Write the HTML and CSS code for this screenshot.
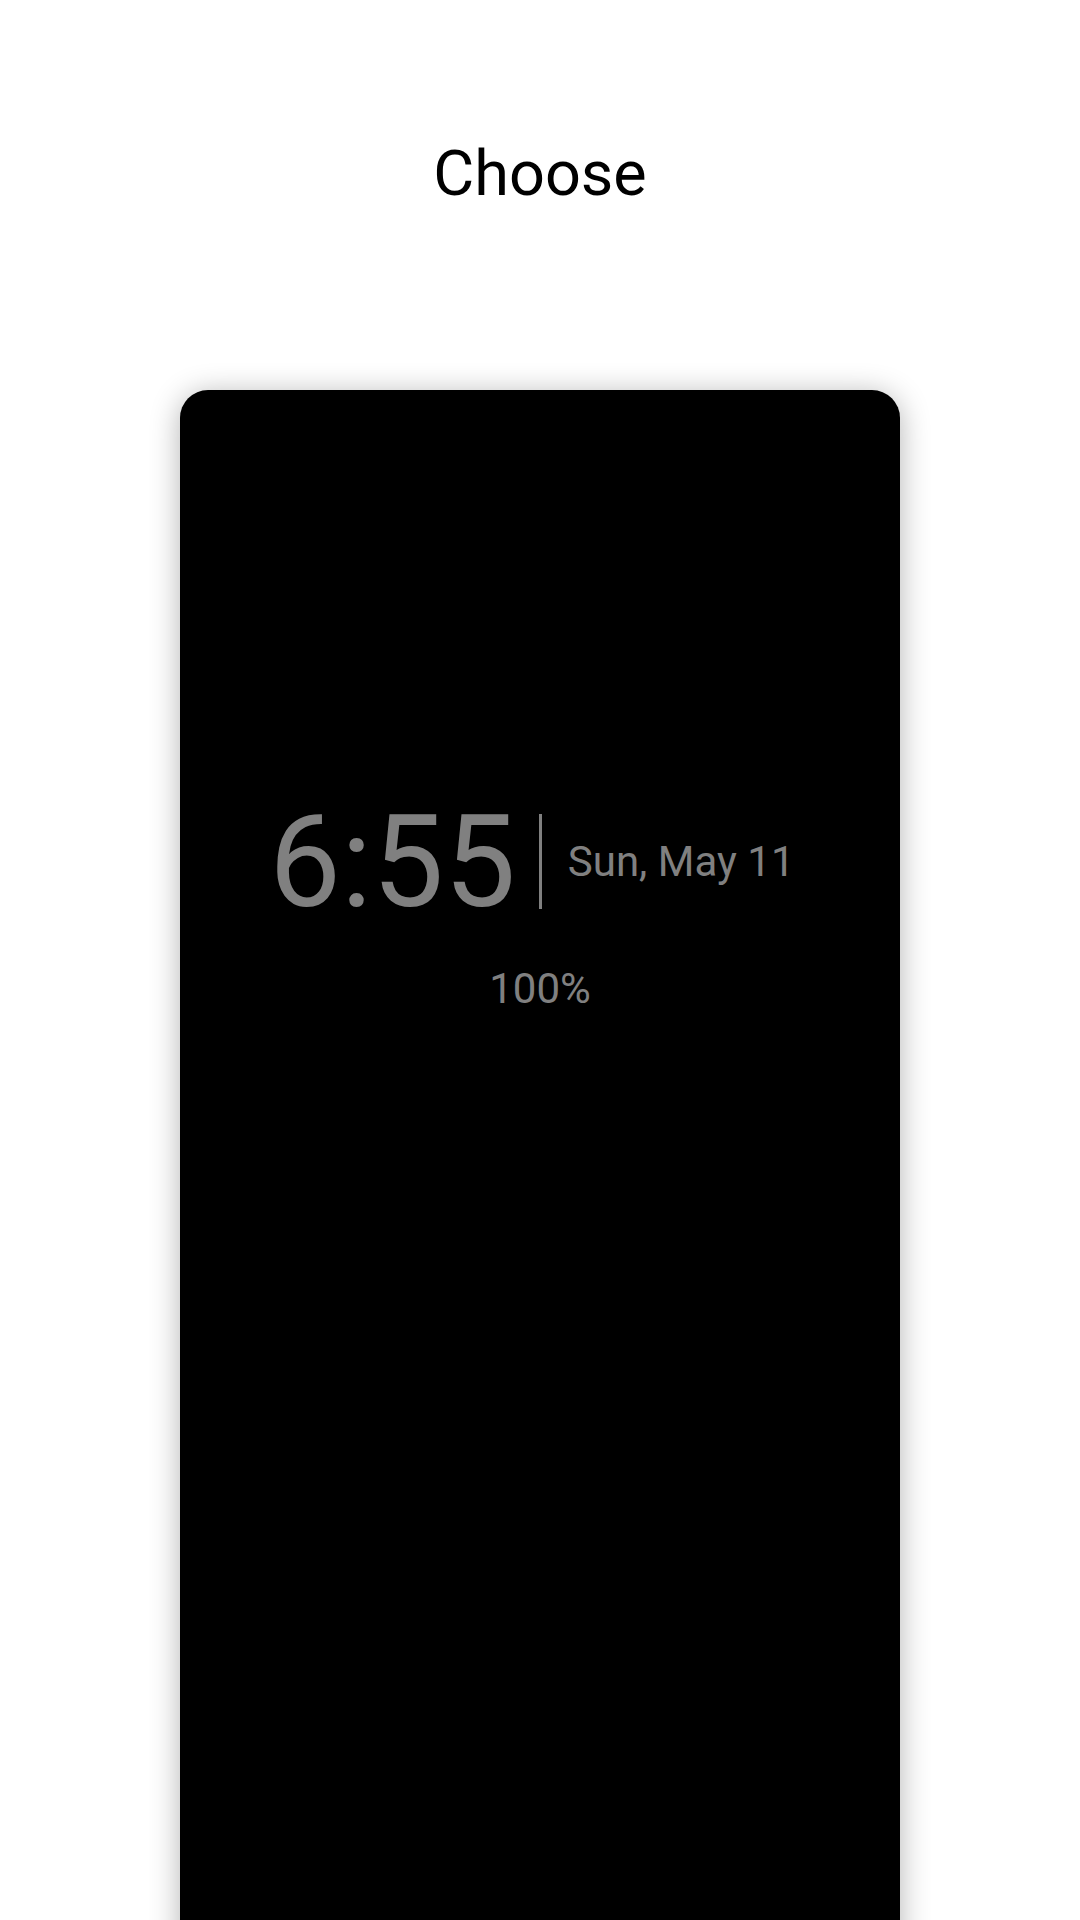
FILE: index.html
```html
<!DOCTYPE html>
<html>
<head>
<meta charset="utf-8">
<link rel="stylesheet" href="styles.css">
</head>
<body>
<div class="screen">
  <h1 class="title">Choose</h1>
  <div class="card">
    <div class="clock-row">
      <span class="time">6:55</span>
      <span class="divider"></span>
      <span class="date">Sun, May 11</span>
    </div>
    <div class="battery">100%</div>
  </div>
</div>
</body>
</html>
```
FILE: styles.css
```css
html, body {
  margin: 0;
  padding: 0;
  background: #ffffff;
  overflow: hidden;
}
.screen {
  width: 1080px;
  height: 1920px;
  overflow: hidden;
  display: flex;
  flex-direction: column;
  align-items: center;
  font-family: Roboto, "Noto Sans", sans-serif;
}
.title {
  margin: 0;
  padding-top: 143px;
  font-size: 63px;
  font-weight: 400;
  line-height: 62px;
  color: #000;
}
.card {
  margin-top: 185px;
  width: 720px;
  height: 1700px;
  flex-shrink: 0;
  background: #000;
  border-radius: 28px;
  box-shadow: 0 4px 30px rgba(0,0,0,0.3);
  display: flex;
  flex-direction: column;
  padding-top: 424px;
  box-sizing: border-box;
}
.clock-row {
  display: flex;
  align-items: center;
  padding-left: 89px;
  height: 95px;
}
.time {
  font-size: 128px;
  line-height: 1;
  color: #808080;
}
.divider {
  width: 3px;
  height: 95px;
  background: #808080;
  margin-left: 23px;
  margin-right: 26px;
}
.date {
  font-size: 42px;
  line-height: 1;
  color: #808080;
}
.battery {
  margin-top: 59px;
  text-align: center;
  font-size: 42px;
  line-height: 1;
  color: #808080;
}
```
